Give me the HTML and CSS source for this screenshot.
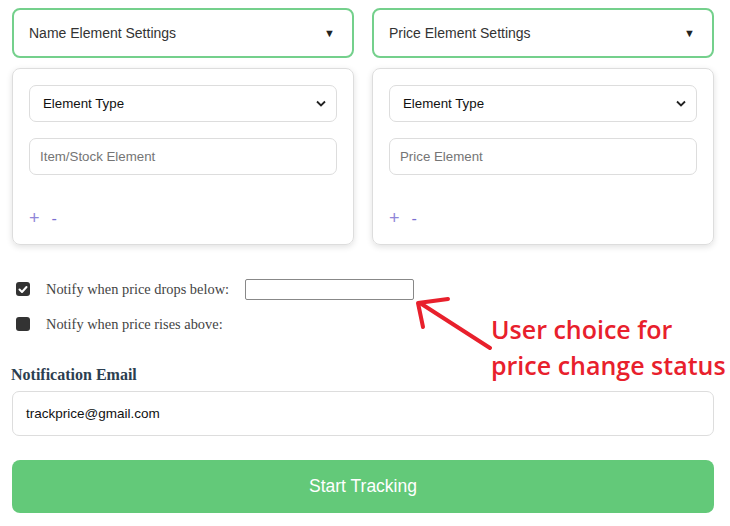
FILE: index.html
```html
<!DOCTYPE html>
<html>
<head>
<meta charset="utf-8">
<link rel="stylesheet" href="styles.css">
</head>
<body>
<div class="page">
  <div class="columns">
    <div class="col">
      <div class="panel-head"><span>Name Element Settings</span><span class="caret">&#9660;</span></div>
      <div class="card">
        <div class="select"><span>Element Type</span><svg class="chev" width="10" height="7" viewBox="0 0 10 7"><path d="M1 1.5 L5 5.5 L9 1.5" fill="none" stroke="#222" stroke-width="1.8"/></svg></div>
        <div class="field placeholder">Item/Stock Element</div>
        <div class="pm"><span class="plus">+</span><span class="minus">-</span></div>
      </div>
    </div>
    <div class="col">
      <div class="panel-head"><span>Price Element Settings</span><span class="caret">&#9660;</span></div>
      <div class="card">
        <div class="select"><span>Element Type</span><svg class="chev" width="10" height="7" viewBox="0 0 10 7"><path d="M1 1.5 L5 5.5 L9 1.5" fill="none" stroke="#222" stroke-width="1.8"/></svg></div>
        <div class="field placeholder">Price Element</div>
        <div class="pm"><span class="plus">+</span><span class="minus">-</span></div>
      </div>
    </div>
  </div>

  <div class="notify">
    <div class="nrow">
      <span class="cb checked"><svg width="10" height="9" viewBox="0 0 10 9"><path d="M1.5 4.5 L4 7 L8.5 2" fill="none" stroke="#fff" stroke-width="2" stroke-linecap="round" stroke-linejoin="round"/></svg></span>
      <span class="nlabel">Notify when price drops below:</span>
      <span class="nbox"></span>
    </div>
    <div class="nrow">
      <span class="cb"></span>
      <span class="nlabel">Notify when price rises above:</span>
    </div>
  </div>

  <div class="email-label">Notification Email</div>
  <div class="email">trackprice@gmail.com</div>
  <div class="btn">Start Tracking</div>
</div>

<svg class="arrow" width="100" height="70" viewBox="0 0 100 70">
  <path d="M90 68 L20 23" fill="none" stroke="#e8202c" stroke-width="4" stroke-linecap="round"/>
  <path d="M48 19 L18 23 L23 47" fill="none" stroke="#e8202c" stroke-width="4" stroke-linecap="round" stroke-linejoin="round"/>
</svg>
<div class="annot">User choice for<br>price change status</div>
</body>
</html>
```
FILE: styles.css
```css
html, body { margin: 0; padding: 0; background: #fff; }
body { width: 730px; height: 526px; overflow: hidden; position: relative; font-family: "Liberation Sans", Arial, sans-serif; }
.page { padding: 8px 16px 0 12px; }
.columns { display: flex; gap: 18px; }
.col { flex: 1; display: flex; flex-direction: column; gap: 10px; }
.panel-head {
  height: 50px; box-sizing: border-box; border: 2px solid #74d08c; border-radius: 8px;
  display: flex; align-items: center; justify-content: space-between;
  padding: 0 17px 0 15px; font-size: 14px; color: #333;
}
.caret { font-size: 11px; color: #222; }
.card {
  height: 177px; box-sizing: border-box; border: 1px solid #ddd; border-radius: 8px;
  box-shadow: 0 2px 6px rgba(0,0,0,0.12); padding: 16px 16px 0 16px;
  display: flex; flex-direction: column;
}
.select, .field {
  height: 37px; box-sizing: border-box; border: 1px solid #ddd; border-radius: 7px;
  display: flex; align-items: center; padding: 0 10px 0 13px; font-size: 13.3px; color: #111;
}
.select { justify-content: space-between; }
.field { margin-top: 16px; padding-left: 10px; }
.placeholder { color: #757575; font-size: 13.3px; }
.pm { margin-top: 33px; display: flex; gap: 12px; align-items: center; padding-left: 0; color: #7b70d0; font-size: 16px; }
.plus { font-size: 18px; font-weight: 300; color: #8f86d8; }
.notify { margin-top: 33px; padding-left: 4px; display: flex; flex-direction: column; gap: 13px; }
.nrow { display: flex; align-items: center; height: 22px; }
.cb { width: 14px; height: 14px; background: #333; border-radius: 3px; display: flex; align-items: center; justify-content: center; }
.nlabel { margin-left: 16px; font-family: "Liberation Serif", "Times New Roman", serif; font-size: 14.4px; color: #444; }
.nbox { margin-left: 16px; width: 169px; height: 21px; box-sizing: border-box; border: 1px solid #888; border-radius: 2px; }
.email-label { margin-top: 31px; margin-left: -1px; font-family: "Liberation Serif", serif; font-weight: bold; font-size: 16px; color: #2c3e50; }
.email {
  margin-top: 7px; height: 45px; box-sizing: border-box; border: 1px solid #ddd; border-radius: 7px;
  display: flex; align-items: center; padding-left: 13px; font-size: 13.5px; color: #111;
}
.btn {
  margin-top: 24px; height: 53px; border-radius: 8px; background: #63c979; color: #fff;
  display: flex; align-items: center; justify-content: center; font-size: 17.5px;
}
.arrow { position: absolute; left: 400px; top: 280px; }
.annot { position: absolute; left: 491px; top: 311px; font-family: "Open Sans", "Noto Sans", sans-serif; font-weight: 600; font-size: 25px; line-height: 36px; color: #e8202c; }
```
